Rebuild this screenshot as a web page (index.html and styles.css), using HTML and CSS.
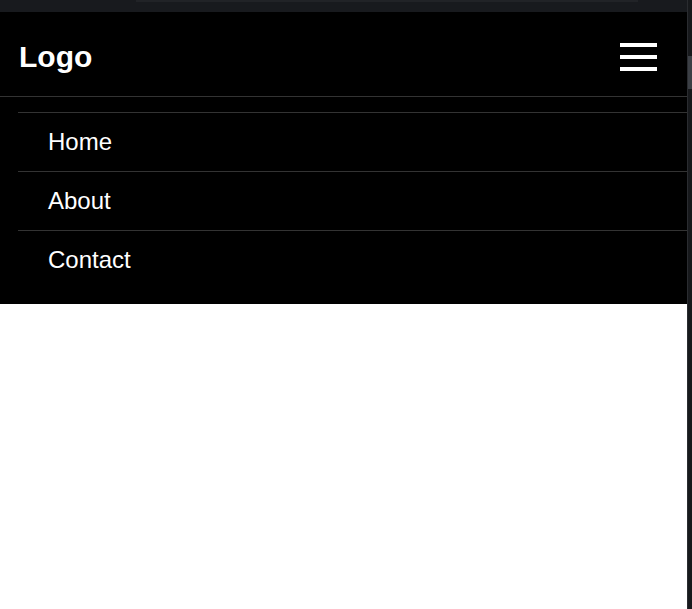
FILE: index.html
```html
<!DOCTYPE html>
<html lang="en">
<head>
<meta charset="utf-8">
<title>Logo</title>
<link rel="stylesheet" href="styles.css">
</head>
<body>
<div class="page">
  <div class="topbar"><div class="topbar-tab"></div></div>
  <header class="header">
    <div class="logo">Logo</div>
    <button class="burger" aria-label="Menu">
      <span class="burger-bar"></span>
      <span class="burger-bar"></span>
      <span class="burger-bar"></span>
    </button>
  </header>
  <nav class="nav">
    <ul class="nav-list">
      <li class="nav-item"><a class="nav-link" href="#">Home</a></li>
      <li class="nav-item"><a class="nav-link" href="#">About</a></li>
      <li class="nav-item"><a class="nav-link" href="#">Contact</a></li>
    </ul>
  </nav>
</div>
<div class="scrollbar"><div class="scrollbar-thumb"></div></div>
</body>
</html>
```

FILE: styles.css
```css
html, body {
  margin: 0;
  padding: 0;
  height: 100%;
}

body {
  display: flex;
  background: #ffffff;
  font-family: "Liberation Sans", Arial, sans-serif;
  overflow: hidden;
}

.page {
  flex: 1;
  min-width: 0;
}

.topbar {
  height: 12px;
  background: #181a1e;
}

.topbar-tab {
  margin-left: 136px;
  width: 502px;
  height: 2px;
  background: #212327;
}

.header {
  box-sizing: border-box;
  height: 85px;
  padding: 6px 30px 0 19px;
  display: flex;
  align-items: center;
  justify-content: space-between;
  background: #000000;
  border-bottom: 1px solid #333333;
}

.logo {
  color: #ffffff;
  font-size: 30px;
  font-weight: bold;
}

.burger {
  display: flex;
  flex-direction: column;
  gap: 8px;
  width: 37px;
  padding: 0;
  margin: 0;
  border: 0;
  background: transparent;
}

.burger-bar {
  display: block;
  height: 4px;
  width: 100%;
  background: #ffffff;
}

.nav {
  background: #000000;
  padding: 15px 0 15px 18px;
}

.nav-list {
  list-style: none;
  margin: 0;
  padding: 0;
}

.nav-item {
  border-top: 1px solid #333333;
}

.nav-link {
  display: block;
  padding: 15px 30px;
  font-size: 24px;
  line-height: 28px;
  color: #ffffff;
  text-decoration: none;
}

.scrollbar {
  width: 5px;
  background: #17191c;
  border-left: 1px solid #2a2c30;
  box-sizing: border-box;
  padding-top: 56px;
}

.scrollbar-thumb {
  height: 33px;
  background: #3b3f45;
}
```
